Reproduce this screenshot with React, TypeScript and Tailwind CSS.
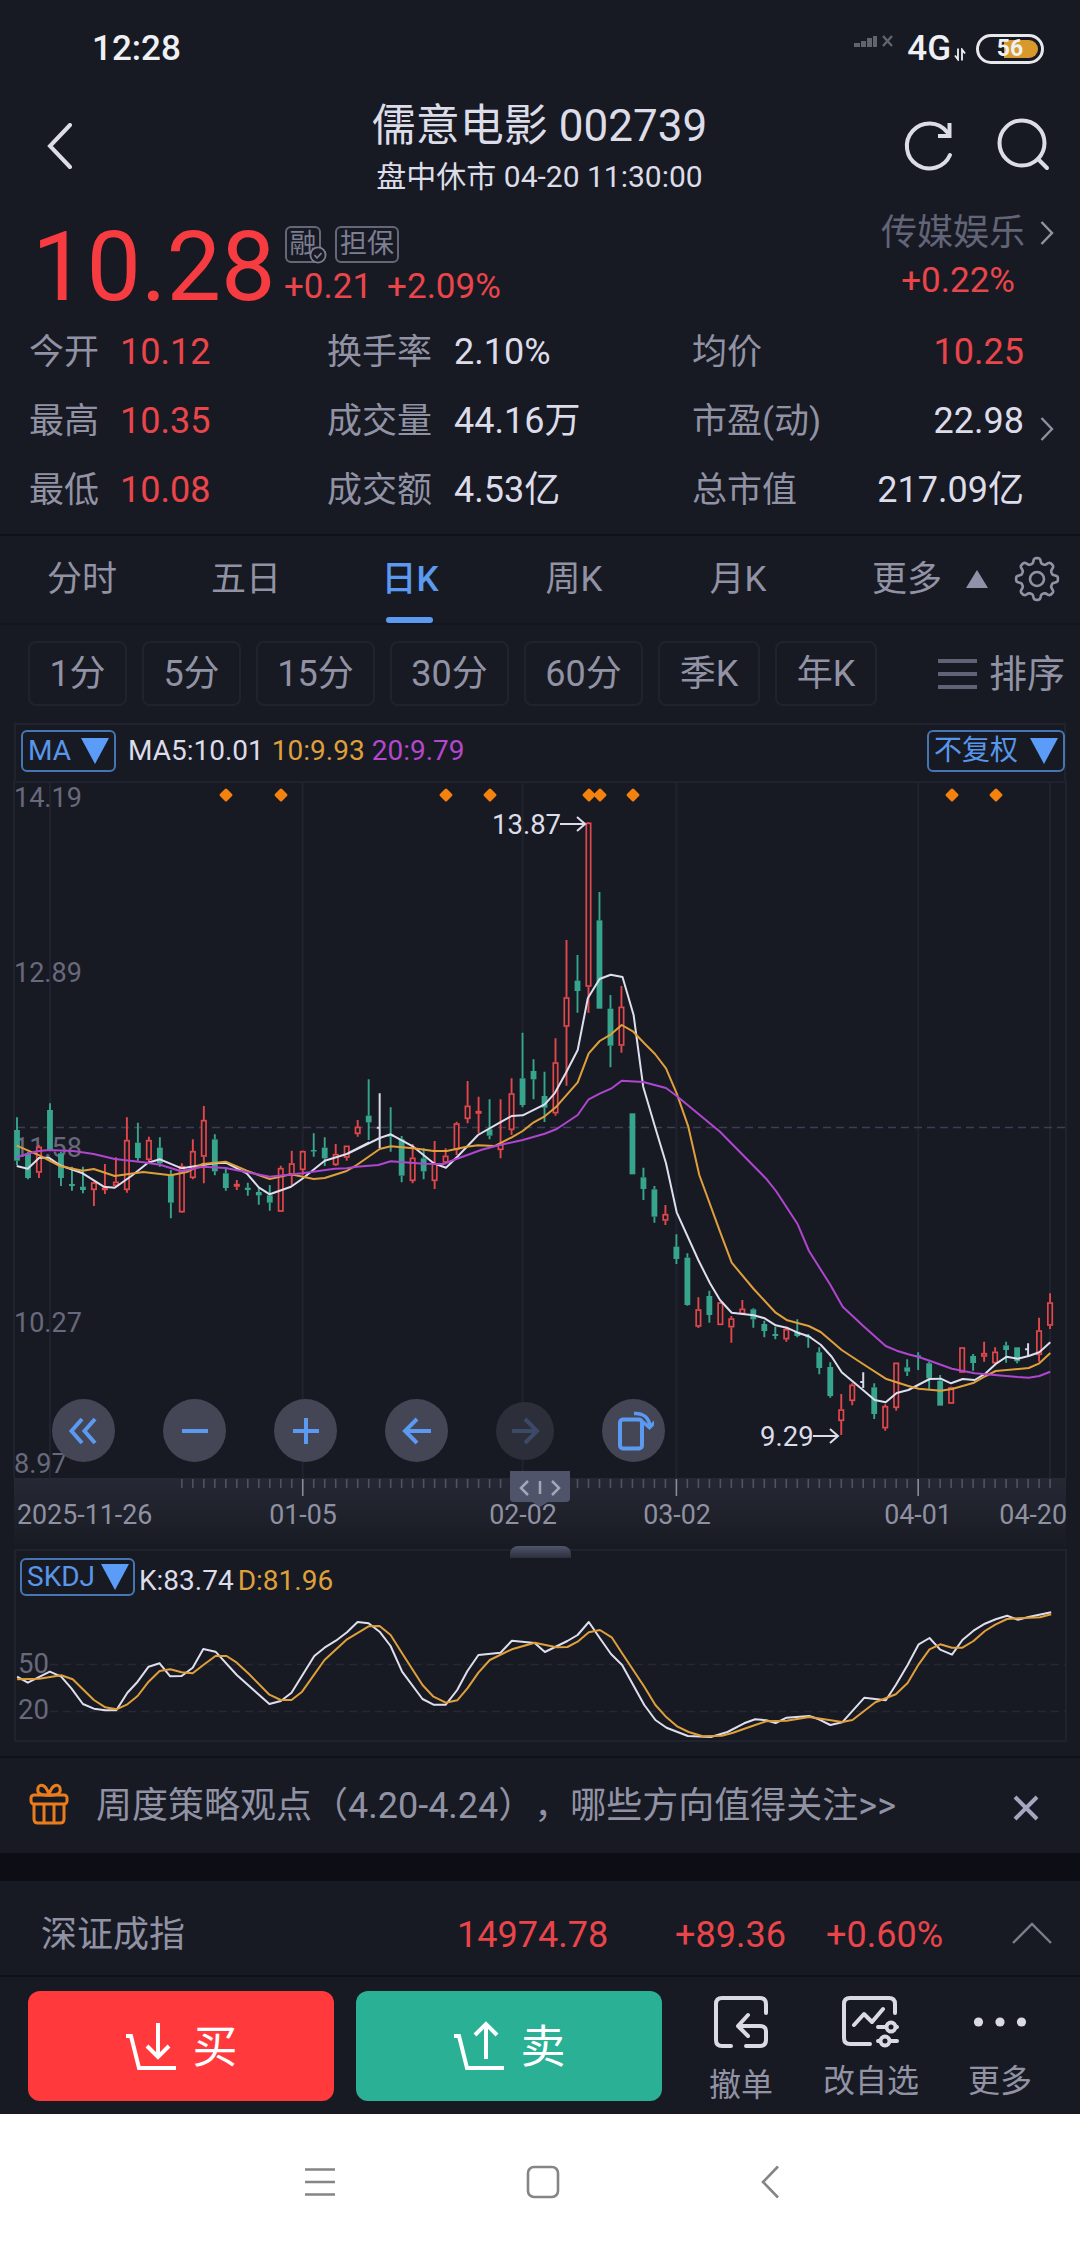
import type { ReactNode } from "react";

type Point = [number, number];

// Every bar sits on an 11px grid that starts at FIRST_X.
const FIRST_X = 17;
const STEP = 10.99;
const barX = (index: number) => FIRST_X + index * STEP;

const UP = "#e2474b";
const DOWN = "#37a58d";
const FLAT = "#d8d8e8";
const MA5 = "#dedeee";
const MA10 = "#dfa03c";
const MA20 = "#b045d0";

// kind, high, body top, body bottom, low (thirds of a pixel below the block's base)
const CANDLES: { base: number; rows: string }[] = [
  {
    base: 1050,
    rows: `g 202 240 332 345|g 305 310 384 388|r 285 290 368 384|g 160 180 300 302|g 305 310 384 408
    |g 350 402 408 422|g 350 410 420 430|r 395 397 420 468|r 342 413 420 432|r 322 395 408 412
    |r 202 270 420 428|g 218 278 324 332|r 260 270 330 335|g 262 293 340 350|g 360 375 458 505
    |r 340 348 487 488|r 268 303 384 388|r 168 210 320 400|g 253 268 364 376|g 355 370 414 422
    |r 390 402 410 420|g 398 413 420 437|g 415 426 436 464|g 405 436 458 482|r 347 354 485 486
    |r 302 340 376 406|r 302 303 360 375|g 250 300 304 320|g 262 293 325 348|r 282 312 345 348
    |r 287 287 323 332|r 210 230 252 260|g 88 197 217 270`,
  },
  {
    base: 1000,
    rows: `w 280 383 383 445|g 322 403 410 455|g 408 418 527 547|r 432 473 543 550|g 445 475 514 538
    |r 423 490 543 567|r 445 467 488 493|r 365 370 450 465|r 243 317 357 370|r 290 333 341 400
    |g 298 388 407 418|r 298 432 450 475|r 235 280 390 405|g 98 235 315 322|g 178 213 238 298
    |g 215 288 323 366|r 115 187 340 347|r -180 -8 80 257|g -135 -58 -27 38|r -534 -532 -40 38
    |g -324 -239 26 26|g -15 26 137 202|r -42 20 137 158|g 340 340 523 523|g 503 532 567 600
    |g 558 568 650 668|r 615 642 662 675`,
  },
  { base: 1110, rows: `g 373 410 447 462|g 430 443 585 587|r 562 598 650 654` },
  {
    base: 1210,
    rows: `g 242 258 315 338|r 277 277 345 345|r 318 325 352 398|r 270 296 312 315|g 295 298 328 353
    |g 332 342 363 382|g 350 372 378 388|r 350 357 388 395|g 328 365 378 382|g 372 378 382 413
    |g 412 427 474 493|g 457 471 558 563|r 552 598 633 675|r 520 524 573 586|w 487 516 516 534
    |g 520 532 612 627|r 583 588 655 662|r 458 458 594 602|g 448 472 485 498|g 427 436 440 480
    |g 455 460 505 538|g 495 512 587 587|r 530 532 581 581|r 412 412 488 488|g 432 438 459 482
    |r 395 429 440 455|r 412 425 460 465|g 395 406 420 458|g 412 412 454 460|w 400 418 418 438
    |r 323 361 435 455|r 250 277 347 357`,
  },
];

const candles = CANDLES.flatMap(({ base, rows }) =>
  rows.split("|").map((row) => {
    const [kind, ...values] = row.trim().split(" ");
    const [high, top, bottom, low] = values.map((v) => base + Number(v) / 3);
    return { kind, high, top, bottom, low };
  }),
);

// Turns "x,y x,y" into canvas points.
function trace(x0: number, y0: number, sx: number, text: string): Point[] {
  return text.split(" ").map((pair) => {
    const [x, y] = pair.split(",").map(Number);
    return [x0 + x * sx, y0 + y / 3];
  });
}
const T = 1 / 3;

const ma5 = [
  ...trace(0, 1050, T, "50,348 83,356 118,323 146,323 180,346 248,370 311,410 344,413 395,377 444,338 480,328 545,355 608,345 644,340 677,338 740,370 776,412 809,433 873,410 906,387 974,332 1040,312 1106,278"),
  ...trace(350, 1000, T, "0,458 89,414 122,403 190,440 251,490 288,503 325,467 384,405 449,368 485,348 518,346 584,313 614,280 647,220 683,150"),
  ...trace(520, 780, 0.3571, "190,655 223,597 254,584 287,591 318,705 345,920"),
  ...trace(350, 1000, T, "915,380 948,490 980,637"),
  ...trace(640, 1110, T, "175,450 210,520 240,570"),
  ...trace(700, 1210, T, "95,308 161,316 194,325 227,346 260,353 293,368 326,379 362,404 395,440 425,487 489,540 524,570 557,577 590,549 625,540 689,507 722,506 753,520 788,507 824,510 857,490 887,462 920,440 953,446 986,438 1018,427 1051,397"),
];
const ma10 = [
  ...trace(0, 1050, T, "50,287 118,316 180,348 248,362 281,357 344,378 430,366 512,376 560,366 608,342 677,335 740,362 809,387 873,373 941,387 974,384 1040,363"),
  ...trace(350, 1000, T, "20,495 89,447 122,439 190,445 251,453 290,453 350,440 384,436 435,438 485,412 518,393 551,367 584,349 617,322 683,247 716,160 749,123 783,103 815,75 850,95 883,130 915,162 948,205 980,280 1015,380 1048,525"),
  ...trace(640, 1110, T, "240,365 275,458"),
  ...trace(700, 1210, T, "161,237 227,308 262,331 326,348 362,366 425,420 489,462 557,506 625,528 656,536 722,542 756,537 822,518 857,498 887,483 986,474 1018,460 1051,429"),
];
const ma20 = [
  ...trace(0, 1050, T, "50,322 110,304 146,300 220,303 281,312 344,327 430,337 480,344 543,364 608,350 677,354 809,380 906,370 1004,356 1040,355"),
  ...trace(350, 1000, T, "20,500 85,495 122,484 221,491 280,492 317,478 395,449 449,435 518,420 584,401 620,387 683,345 716,298 749,281 783,266 815,242 880,246 948,264 980,288"),
  ...trace(640, 1110, T, "240,65 380,208 408,243 473,343 507,423 570,523"),
  ...trace(700, 1210, T, "428,290 489,347 557,408 590,422 625,433 656,441 689,452 756,476 824,490 953,501 986,503 1018,498 1051,485"),
];
const kLine = [
  ...trace(0, 1380, 0.4082, "42,890 68,908 122,875 150,890 175,925 203,972 230,986 258,991 285,991 312,938 337,905 364,860 391,850 417,889 445,888 472,863 498,807 528,815 580,885 660,972 688,963 714,938 770,828 795,803 823,782 850,757 876,726 903,730 930,755 957,798 985,875 1035,957 1062,974 1092,974 1120,930 1145,873 1172,825 1226,818 1254,782 1310,789 1335,816 1390,783 1415,765"),
  ...trace(500, 1380, 0.3699, "240,726 270,775 300,822 330,855 390,975 420,1020 450,1043 508,1068 570,1071 615,1056 660,1030 690,1018 720,1021 745,1029 775,1013 836,1008 862,1018 893,1035 925,1027 985,953 1043,961 1070,915 1102,855 1132,793 1161,774 1190,809 1222,824 1250,780 1280,752 1311,731 1340,718 1371,707 1400,719 1432,710 1490,697"),
];
const dLine = [
  ...trace(0, 1380, 0.4082, "42,898 96,896 150,886 178,898 230,960 258,982 285,988 312,973 337,948 364,905 391,873 417,868 445,877 472,880 498,855 528,828 555,828 580,848 610,882 660,944 688,960 714,960 740,935 795,840 850,778 903,739 930,738 957,765 985,820 1035,915 1062,950 1092,968 1120,961 1145,925 1172,878 1200,840 1254,808 1310,788 1363,802 1390,801 1415,785"),
  ...trace(500, 1380, 0.3699, "240,757 270,750 302,772 330,820 390,920 420,975 450,1012 480,1040 510,1056 548,1069 600,1067 630,1058 690,1035 720,1024 775,1022 836,1011 925,1026 953,1020 1015,967 1070,943 1102,909 1132,853 1161,808 1190,793 1222,803 1250,803 1280,783 1311,753 1340,733 1371,717 1400,715 1460,712 1490,703"),
];

const toPoints = (points: Point[]) =>
  points.map(([x, y]) => `${x.toFixed(1)},${y.toFixed(1)}`).join(" ");

const MONTH_BARS = [26, 46, 60, 82];

function Line({ points, color }: { points: Point[]; color: string }) {
  return (
    <polyline
      points={toPoints(points)}
      fill="none"
      stroke={color}
      strokeWidth={2}
      strokeLinejoin="round"
    />
  );
}

function Chevron({ className }: { className: string }) {
  return (
    <svg viewBox="0 0 14 24" className={className} fill="none" stroke="currentColor" strokeWidth={2.4}>
      <path d="M1.5 1 12 12 1.5 23" />
    </svg>
  );
}

function StatusBar() {
  return (
    <div className="flex h-[98px] items-center pr-[36px] pl-[92px] text-[#eef0f4]">
      <span className="text-[35px] font-medium">12:28</span>
      <svg viewBox="0 0 40 14" className="-mt-4 ml-auto h-[14px] w-[40px]" fill="#62646c">
        <rect x="0" y="9" width="6" height="4" />
        <rect x="7" y="7" width="5" height="6" />
        <rect x="13" y="4" width="5" height="9" />
        <rect x="19" y="2" width="4" height="11" />
        <path d="m29 2 9 10M38 2l-9 10" stroke="#62646c" strokeWidth="2.4" />
      </svg>
      <span className="ml-[13px] text-[35px] font-medium">4G</span>
      <svg viewBox="0 0 12 12" className="mt-3 ml-[3px] h-[13px] w-[12px]" fill="none" stroke="currentColor" strokeWidth="1.8">
        <path d="M4 0v11L1 7M8 12V1l3 4" />
      </svg>
      <span className="relative ml-[10px] flex h-[30px] w-[68px] items-center justify-center rounded-full border-[3px] border-[#e6e8ec] p-[3px]">
        <span className="ml-auto h-full w-[34px] rounded-r-full bg-[#d9982c]" />
        <span className="absolute inset-0 flex items-center justify-center text-[23px] leading-none font-bold">
          56
        </span>
      </span>
    </div>
  );
}

function Header() {
  return (
    <header className="flex h-[113px] items-start justify-between pt-[1px] pr-[30px] pl-[46px] text-[#dcdde8]">
      <svg viewBox="0 0 27 46" className="mt-[24px] h-[46px] w-[27px]" fill="none" stroke="currentColor" strokeWidth="4">
        <path d="M24 2 4 23l20 21" strokeLinecap="round" />
      </svg>
      <div className="ml-[105px] flex flex-col items-center whitespace-nowrap">
        <h1 className="flex h-[55px] items-center text-[44px]">儒意电影 002739</h1>
        <p className="flex h-[45px] items-center text-[30px]">盘中休市 04-20 11:30:00</p>
      </div>
      <div className="flex gap-[41px] pt-[18px]">
        <svg viewBox="0 0 54 56" className="h-[56px] w-[54px]" fill="none" stroke="currentColor" strokeWidth="4">
          <path d="M46 15A22.5 22.5 0 1 0 49 38" strokeLinecap="round" />
          <path d="M48.5 6v13H37" />
        </svg>
        <svg viewBox="0 0 54 56" className="h-[56px] w-[54px]" fill="none" stroke="currentColor" strokeWidth="4">
          <circle cx="26" cy="26" r="22.5" />
          <path d="m42 42 9 9" strokeLinecap="round" />
        </svg>
      </div>
    </header>
  );
}

function Price() {
  return (
    <section className="flex h-[105px] pr-[26px] pl-[32px]">
      <div className="flex h-[105px] w-[253px] items-center pt-[9px] text-[97px] leading-none text-[#f63c40]">
        10.28
      </div>
      <div>
        <div className="mt-[15px] flex gap-[14px] text-[27px] leading-none text-[#7d7f92]">
          <span className="relative flex h-[37px] w-[36px] items-center justify-center rounded-md border-2 border-[#656779]">
            融
            <svg viewBox="0 0 18 18" className="absolute -right-[8px] -bottom-[3px] h-[18px] w-[18px]" fill="#181a23" stroke="currentColor" strokeWidth="1.8">
              <circle cx="9" cy="9" r="7.6" />
              <path d="m5.5 9 2.5 3 4.500-5" />
            </svg>
          </span>
          <span className="flex h-[37px] w-[64px] items-center justify-center rounded-md border-2 border-[#656779]">
            担保
          </span>
        </div>
        <div className="-ml-[1px] mt-[5px] flex gap-[15px] text-[35px] leading-[38px] text-[#ea454a]">
          <span>+0.21</span>
          <span>+2.09%</span>
        </div>
      </div>
      <div className="ml-auto flex flex-col items-end">
        <div className="flex h-[44px] items-center text-[36px] leading-none text-[#626477]">
          传媒娱乐
          <Chevron className="ml-[15px] h-[24px] w-[14px] text-[#9294a4]" />
        </div>
        <span className="mt-[7px] mr-[39px] text-[35px] leading-[38px] text-[#ea454a]">+0.22%</span>
      </div>
    </section>
  );
}

const QUOTE_ROWS = [
  ["今开", "10.12", "换手率", "2.10%", "均价", "10.25"],
  ["最高", "10.35", "成交量", "44.16万", "市盈(动)", "22.98"],
  ["最低", "10.08", "成交额", "4.53亿", "总市值", "217.09亿"],
];

function Quotes() {
  return (
    <section className="flex h-[220px] flex-col border-b-2 border-[#101117] pt-[2px] text-[35px] whitespace-nowrap text-[#9193a5]">
      {QUOTE_ROWS.map(([a, open, b, volume, c, value]) => (
        <div
          key={a}
          className="relative grid h-[69px] grid-cols-[91px_207px_127px_238px_1fr_auto] items-center pr-[56px] pl-[29px] leading-none"
        >
          <span>{a}</span>
          <span className="text-[36px] text-[#ea454a]">{open}</span>
          <span>{b}</span>
          <span className="text-[36px] text-[#dcdcea]">{volume}</span>
          <span>{c}</span>
          <span
            className={
              value === "10.25" ? "text-[36px] text-[#ea454a]" : "text-[36px] text-[#dcdcea]"
            }
          >
            {value}
          </span>
          {c === "市盈(动)" && (
            <Chevron className="absolute top-[30px] right-[26px] h-[24px] w-[14px] text-[#8e90a2]" />
          )}
        </div>
      ))}
    </section>
  );
}

const gearPath = () => {
  const points: string[] = [];
  for (let i = 0; i < 160; i++) {
    const angle = (i / 160) * Math.PI * 2;
    const radius = 18.4 + 2.6 * Math.tanh(2 * Math.cos(8 * angle));
    points.push(
      `${(23 + radius * Math.cos(angle)).toFixed(2)} ${(23 + radius * Math.sin(angle)).toFixed(2)}`,
    );
  }
  return `M${points.join("L")}Z`;
};

function Tabs() {
  return (
    <nav className="flex h-[89px] items-center border-b-2 border-[#14151c] text-[35px] leading-none text-[#9193a5]">
      {["分时", "五日", "日K", "周K", "月K"].map((tab) => (
        <div
          key={tab}
          className={
            tab === "日K"
              ? "relative flex h-full w-[164px] items-center justify-center font-medium text-[#5b9af0]"
              : "flex h-full w-[164px] items-center justify-center"
          }
        >
          {tab}
          {tab === "日K" && (
            <span className="absolute bottom-0 left-[58px] h-[6px] w-[47px] rounded-full bg-[#5b9af0]" />
          )}
        </div>
      ))}
      <span className="ml-[52px]">更多</span>
      <svg viewBox="0 0 22 18" className="ml-[24px] h-[18px] w-[22px]" fill="#8f92a8">
        <path d="M11 0 22 18H0Z" />
      </svg>
      <svg viewBox="0 0 46 46" className="ml-[26px] h-[46px] w-[46px]" fill="none" stroke="#9193a5" strokeWidth="2.6">
        <path d={gearPath()} strokeLinejoin="round" />
        <circle cx="23" cy="23" r="7" />
      </svg>
    </nav>
  );
}

function Periods() {
  const chip = "flex h-[65px] items-center justify-center rounded-lg border-2 border-[#20222c]";
  return (
    <div className="flex h-[98px] items-center gap-[15px] pr-[15px] pl-[28px] text-[36px] leading-none whitespace-nowrap text-[#9193a5]">
      <span className={`${chip} w-[99px]`}>1分</span>
      <span className={`${chip} w-[99px]`}>5分</span>
      <span className={`${chip} w-[119px]`}>15分</span>
      <span className={`${chip} w-[119px]`}>30分</span>
      <span className={`${chip} w-[119px]`}>60分</span>
      <span className={`${chip} w-[102px]`}>季K</span>
      <span className={`${chip} w-[102px]`}>年K</span>
      <span className="ml-auto flex items-center gap-[12px] text-[38px]">
        <svg viewBox="0 0 39 32" className="h-[32px] w-[39px]" stroke="#606276" strokeWidth="4">
          <path d="M0 3h39M0 16h39M0 29h39" />
        </svg>
        排序
      </span>
    </div>
  );
}

function Picker({ className, children }: { className: string; children: ReactNode }) {
  return (
    <span
      className={`flex items-center justify-between rounded-md border-2 border-[#4675b3] text-[28px] leading-none text-[#5896ea] ${className}`}
    >
      {children}
      <svg viewBox="0 0 28 26" className="h-[26px] w-[28px]" fill="#5b9cf8">
        <path d="M0 0h28L14 26Z" />
      </svg>
    </span>
  );
}

const MARKERS = [226, 281, 446, 490, 589, 600, 633, 952, 996];
const PRICE_LABELS: [string, number][] = [
  ["14.19", 807],
  ["12.89", 982],
  ["11.58", 1157],
  ["10.27", 1332],
  ["8.97", 1473],
];

function KLine() {
  return (
    <svg viewBox="0 781 1080 697" className="block h-[697px] w-[1080px] overflow-visible">
      <g stroke="#20222d" strokeWidth="2">
        <path d="M14 781V1478M1066 781V1478M14 782H1066" />
        <path d="M50 781V1478M1050 781V1478" />
        {MONTH_BARS.map((bar) => (
          <path key={bar} d={`M${barX(bar)} 781V1478`} />
        ))}
      </g>
      <path d="M17 1127.500H1066" stroke="#3d3e55" strokeWidth="1.6" strokeDasharray="8 5" />
      <g fill="#68697c" fontSize="27">
        {PRICE_LABELS.map(([label, y]) => (
          <text key={label} x="14" y={y}>
            {label}
          </text>
        ))}
      </g>
      {candles.map(({ kind, high, top, bottom, low }, index) => {
        const x = barX(index);
        if (kind === "w") {
          return (
            <path
              key={index}
              d={`M${x} ${high}V${low}M${x - 3} ${top}H${x}`}
              stroke={FLAT}
              strokeWidth="2"
            />
          );
        }
        const color = kind === "r" ? UP : DOWN;
        return (
          <g key={index} stroke={color}>
            <path d={`M${x} ${high}V${top}M${x} ${bottom}V${low}`} strokeWidth="1.9" />
            {kind === "r" ? (
              <rect
                x={x - 2.2}
                y={top + 0.7}
                width="4.4"
                height={Math.max(bottom - top - 1.4, 1)}
                fill="#181a23"
                strokeWidth="1.7"
              />
            ) : (
              <rect
                x={x - 2.9}
                y={top}
                width="5.8"
                height={Math.max(bottom - top, 1.5)}
                fill={color}
                stroke="none"
              />
            )}
          </g>
        );
      })}
      <Line points={ma5} color={MA5} />
      <Line points={ma10} color={MA10} />
      <Line points={ma20} color={MA20} />
      {MARKERS.map((x) => (
        <rect
          key={x}
          x={x - 5}
          y="790"
          width="10"
          height="10"
          rx="1.500"
          fill="#f5820f"
          transform={`rotate(45 ${x} 795)`}
        />
      ))}
      <g fill="#dcdcea" fontSize="27.500">
        <text x="492" y="834">13.87</text>
        <text x="760" y="1446">9.29</text>
      </g>
      <g fill="none" stroke="#dcdcea" strokeWidth="2">
        <path d="M560 824H585M577 817l8 7-8 7" />
        <path d="M813 1436H838M830 1429l8 7-8 7" />
      </g>
    </svg>
  );
}

function RoundButton({ children, dim }: { children: ReactNode; dim?: boolean }) {
  return (
    <span
      className={
        dim
          ? "flex h-[58px] w-[58px] items-center justify-center rounded-full bg-[#2f313d]/90"
          : "flex h-[63px] w-[63px] items-center justify-center rounded-full bg-[#444655]"
      }
    >
      <svg
        viewBox="0 0 40 40"
        className="h-[40px] w-[40px]"
        fill="none"
        stroke={dim ? "#3c4a68" : "#5b9af0"}
        strokeWidth="4"
      >
        {children}
      </svg>
    </span>
  );
}

function ChartControls() {
  return (
    <div className="absolute top-[618px] left-[52px] flex items-center gap-[48px]">
      <RoundButton>
        <path d="M18 8 7.500 20 18 32M31 8 20.500 20 31 32" />
      </RoundButton>
      <RoundButton>
        <path d="M7 20h26" />
      </RoundButton>
      <RoundButton>
        <path d="M7 20h26M20 7v26" />
      </RoundButton>
      <RoundButton>
        <path d="M34 20H9M20 8 8 20l12 12" />
      </RoundButton>
      <RoundButton dim>
        <path d="M7 20h24M20 8l12 12-12 12" />
      </RoundButton>
      <RoundButton>
        <rect x="6" y="8.500" width="22" height="29" rx="3" />
        <path d="M20 2.500c9-.5 15 4 16 13M29 11l6.500 5.500L42 10" strokeWidth="3.600" />
      </RoundButton>
    </div>
  );
}

const DATES: [string, number, "start" | "middle" | "end"][] = [
  ["2025-11-26", 17, "start"],
  ["01-05", 303, "middle"],
  ["02-02", 523, "middle"],
  ["03-02", 677, "middle"],
  ["04-01", 918, "middle"],
  ["04-20", 1067, "end"],
];

function DateAxis() {
  return (
    <div className="relative ml-[14px] h-[71px] w-[1052px] bg-linear-to-b from-[#262834] to-[#181a23]">
      <svg viewBox="14 1478 1052 71" className="block h-[71px] w-[1052px]">
        {Array.from({ length: 80 }, (_, i) => i + 15).map((bar) => (
          <path
            key={bar}
            d={`M${barX(bar)} 1479V${MONTH_BARS.includes(bar) ? 1496 : 1488}`}
            stroke={MONTH_BARS.includes(bar) ? "#8a8c9c" : "#515362"}
            strokeWidth="1.6"
          />
        ))}
        <g fill="#8f91a1" fontSize="26.800">
          {DATES.map(([label, x, anchor]) => (
            <text key={label} x={x} y="1524" textAnchor={anchor}>
              {label}
            </text>
          ))}
        </g>
      </svg>
      <svg viewBox="0 0 62 36" className="absolute -top-[7px] left-[495px] h-[36px] w-[62px]">
        <path d="M1 0h60v27q0 4-4 4H39l-8 5-8-5H5q-4 0-4-4Z" fill="#50546a" />
        <path d="m19 10-7 7 7 7M43 10l7 7-7 7M31 10v13" fill="none" stroke="#a4a7b8" strokeWidth="2.500" />
      </svg>
    </div>
  );
}

function Skdj() {
  return (
    <section className="relative mx-[14px] h-[193px] w-[1053px] border-2 border-[#20222d]">
      <svg viewBox="16 1551 1049 189" className="absolute inset-0 h-[189px] w-[1049px]">
        <path d="M50 1664.500H1065M50 1711.500H1065" stroke="#252733" strokeWidth="1.5" strokeDasharray="8 5" />
        <g fill="#68697c" fontSize="27.500">
          <text x="18" y="1673">50</text>
          <text x="18" y="1719">20</text>
        </g>
        <Line points={kLine} color={MA5} />
        <Line points={dLine} color={MA10} />
      </svg>
      <span className="absolute -top-[5px] left-[494px] h-[12px] w-[61px] rounded-t-lg bg-linear-to-b from-[#50556a] to-[#2c303d]" />
      <div className="relative flex pt-[7px] pl-[4px] text-[28px] leading-none">
        <Picker className="h-[38px] w-[115px] pr-[4px] pl-[5px]">SKDJ</Picker>
        <span className="mt-[9px] ml-[4px] text-[#dcdcea]">K:83.74</span>
        <span className="mt-[9px] ml-[4px] text-[#dfa03c]">D:81.96</span>
      </div>
    </section>
  );
}

function Banner() {
  return (
    <div className="mt-[14px] flex h-[97px] items-center border-t-2 border-[#101117] pr-[41px] pl-[29px] text-[36px] leading-none whitespace-nowrap text-[#9193a5]">
      <svg viewBox="0 0 40 42" className="mb-[3px] h-[42px] w-[40px]" fill="none" stroke="#e97c1c" strokeWidth="3">
        <path d="M20 12C10 13 8 9 9 5s8-5 11 7c3-12 10-11 11-7s-1 8-11 7Z" />
        <rect x="2" y="12" width="36" height="9" rx="3" />
        <path d="M5 21v15q0 4 4 4h22q4 0 4-4V21M15 21v19M25 21v19" />
      </svg>
      <span className="ml-[27px] [text-spacing-trim:space-all]">
        周度策略观点（4.20-4.24），哪些方向值得关注&gt;&gt;
      </span>
      <svg viewBox="0 0 26 26" className="mt-[5px] ml-auto h-[26px] w-[26px]" stroke="#a4a7c0" strokeWidth="4">
        <path d="m2 2 22 22M24 2 2 24" />
      </svg>
    </div>
  );
}

function IndexRow() {
  return (
    <div className="flex h-[96px] items-center border-b-2 border-[#101117] pt-[14px] pr-[28px] pl-[41px] text-[36px] leading-none text-[#9193a5]">
      <span>深证成指</span>
      <span className="ml-[272px] w-[218px] text-[#ea454a]">14974.78</span>
      <span className="w-[151px] text-[#ea454a]">+89.36</span>
      <span className="text-[#ea454a]">+0.60%</span>
      <svg viewBox="0 0 40 22" className="mb-[4px] ml-auto h-[22px] w-[40px]" fill="none" stroke="#7b7d8d" strokeWidth="2.400">
        <path d="M1 21 20 2l19 19" />
      </svg>
    </div>
  );
}

function ActionBar() {
  return (
    <div className="flex h-[137px] pt-[14px] pl-[28px] text-[32px] leading-none text-[#9193a5]">
      <button className="flex h-[110px] w-[306px] items-center justify-center gap-[14px] rounded-xl bg-[#ff393c] text-[45px] leading-none text-white">
        <svg viewBox="0 0 54 50" className="h-[50px] w-[54px]" fill="none" stroke="white" strokeWidth="4">
          <path d="M2 15h5l8 32h37" />
          <path d="M34 2v32M23 25l11 11 11-11" />
        </svg>
        <span className="pt-[2px]">买</span>
      </button>
      <button className="ml-[22px] flex h-[110px] w-[306px] items-center justify-center gap-[14px] rounded-xl bg-[#2ab095] text-[45px] leading-none text-white">
        <svg viewBox="0 0 54 50" className="h-[50px] w-[54px]" fill="none" stroke="white" strokeWidth="4">
          <path d="M2 15h5l8 32h37" />
          <path d="M34 38V3M23 14 34 3l11 11" />
        </svg>
        <span className="pt-[2px]">卖</span>
      </button>
      <div className="ml-[37px] flex w-[84px] flex-col items-center pt-[4px]">
        <svg viewBox="0 0 58 56" className="h-[56px] w-[58px]" fill="none" stroke="#d9dae6" strokeWidth="4" strokeLinecap="round" strokeLinejoin="round">
          <path d="M54 18V9q0-6-6-6H10Q4 3 4 9v36q0 6 6 6h9M34 51h14q6 0 6-6V36q0-5-6-5H27M36 20 26 31l10 10" />
        </svg>
        <span className="mt-[18px]">撤单</span>
      </div>
      <div className="ml-[36px] flex w-[104px] flex-col items-center pt-[4px]">
        <svg viewBox="0 0 62 56" className="h-[56px] w-[62px]" fill="none" stroke="#d9dae6" strokeWidth="4" strokeLinecap="round" strokeLinejoin="round">
          <path d="M55 18V9q0-6-6-6H10Q4 3 4 9v34q0 6 6 6h20M14 30l10-11 8 8 11-13" />
          <path d="M38 32h7M56 32h1M38 46h1M50 46h7" />
          <circle cx="51" cy="32" r="4.500" />
          <circle cx="45" cy="46" r="4.500" />
        </svg>
        <span className="mt-[14px]">改自选</span>
      </div>
      <div className="ml-[41px] flex w-[72px] flex-col items-center pt-[4px]">
        <svg viewBox="0 0 56 56" className="h-[56px] w-[56px]" fill="#d9dae6">
          <circle cx="6.500" cy="27" r="4.600" />
          <circle cx="28" cy="27" r="4.600" />
          <circle cx="49.500" cy="27" r="4.600" />
        </svg>
        <span className="mt-[14px]">更多</span>
      </div>
    </div>
  );
}

function SystemNav() {
  return (
    <div className="flex h-[130px] items-start bg-white pt-[51px] pl-[304px] text-[#858585]">
      <svg viewBox="0 0 32 34" className="h-[34px] w-[32px]" stroke="currentColor" strokeWidth="2.600">
        <path d="M1 4.500h30M1 17h30M1 29.500h30" />
      </svg>
      <svg viewBox="0 0 34 34" className="ml-[190px] h-[34px] w-[34px]" fill="none" stroke="currentColor" strokeWidth="2.600">
        <rect x="2" y="2" width="30" height="30" rx="6" />
      </svg>
      <svg viewBox="0 0 20 34" className="ml-[200px] h-[34px] w-[20px]" fill="none" stroke="currentColor" strokeWidth="2.600">
        <path d="M18 1.500 3 17l15 15.500" />
      </svg>
    </div>
  );
}

export default function App() {
  return (
    <div className="flex h-[2244px] w-[1080px] flex-col overflow-hidden bg-[#181a23] font-[Roboto,'Noto_Sans_CJK_SC',sans-serif]">
      <StatusBar />
      <Header />
      <Price />
      <Quotes />
      <Tabs />
      <Periods />
      <div className="mx-[14px] flex h-[59px] items-center border-x-2 border-t-2 border-[#20222d] pb-[4px] pl-[5px] text-[28px] leading-none">
        <Picker className="h-[42px] w-[95px] pr-[5px] pl-[5px]">MA</Picker>
        <span className="ml-[12px] text-[#dcdcea]">MA5:10.01</span>
        <span className="ml-[8px] text-[#dfa03c]">10:9.93</span>
        <span className="ml-[7px] text-[#b348cf]">20:9.79</span>
        <Picker className="mr-[-1px] ml-auto h-[42px] w-[138px] pr-[5px] pl-[5px]">不复权</Picker>
      </div>
      <div className="relative">
        <KLine />
        <ChartControls />
      </div>
      <DateAxis />
      <Skdj />
      <Banner />
      <div className="h-[28px] bg-[#0d0e15]" />
      <IndexRow />
      <ActionBar />
      <SystemNav />
    </div>
  );
}
